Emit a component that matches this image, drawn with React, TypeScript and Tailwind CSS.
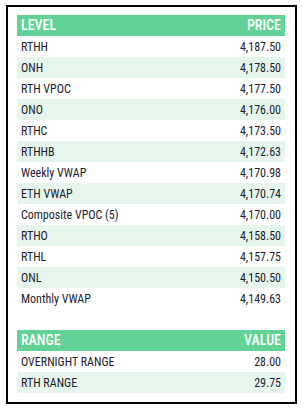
const levels = [
  { name: "RTHH", price: "4,187.50" },
  { name: "ONH", price: "4,178.50" },
  { name: "RTH VPOC", price: "4,177.50" },
  { name: "ONO", price: "4,176.00" },
  { name: "RTHC", price: "4,173.50" },
  { name: "RTHHB", price: "4,172.63" },
  { name: "Weekly VWAP", price: "4,170.98" },
  { name: "ETH VWAP", price: "4,170.74" },
  { name: "Composite VPOC (5)", price: "4,170.00" },
  { name: "RTHO", price: "4,158.50" },
  { name: "RTHL", price: "4,157.75" },
  { name: "ONL", price: "4,150.50" },
  { name: "Monthly VWAP", price: "4,149.63" },
];

const ranges = [
  { name: "OVERNIGHT RANGE", price: "28.00" },
  { name: "RTH RANGE", price: "29.75" },
];

function Table({ head, rows }: { head: [string, string]; rows: { name: string; price: string }[] }) {
  return (
    <div className="w-[268px]">
      <div className="flex h-[21px] items-center justify-between bg-[#62d296] px-[4px] text-[14px] font-medium text-white">
        <span>{head[0]}</span>
        <span>{head[1]}</span>
      </div>
      {rows.map((r, i) => (
        <div
          key={r.name}
          className={`flex h-[21px] items-center justify-between px-[4px] text-[12px] text-[#1c1c2e] ${
            i % 2 === 1 ? "bg-[#e7f6ed]" : "bg-white"
          }`}
        >
          <span>{r.name}</span>
          <span>{r.price}</span>
        </div>
      ))}
    </div>
  );
}

export default function App() {
  return (
    <div className="min-h-[408px] bg-white pl-[6px] pt-[5px] font-['Liberation_Sans_Narrow','Roboto_Condensed',sans-serif]">
      <div className="flex h-[399px] w-[291px] flex-col gap-[21px] border-2 border-black pl-[9px] pt-[8px]">
        <Table head={["LEVEL", "PRICE"]} rows={levels} />
        <Table head={["RANGE", "VALUE"]} rows={ranges} />
      </div>
    </div>
  );
}
